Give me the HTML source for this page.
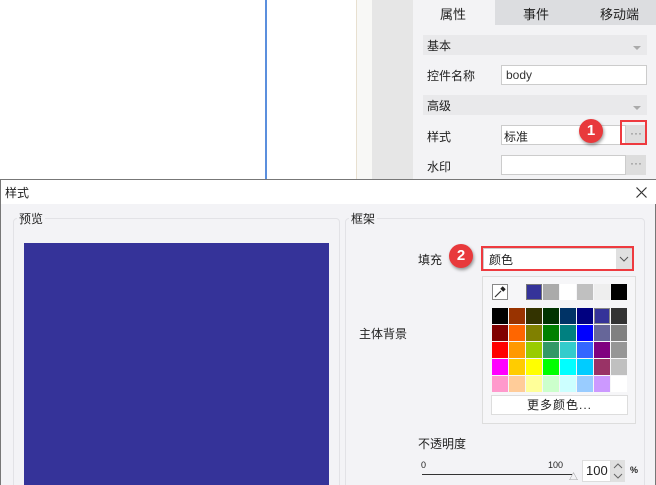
<!DOCTYPE html><html><head><meta charset="utf-8"><style>
*{margin:0;padding:0;box-sizing:border-box}
html,body{width:656px;height:485px;overflow:hidden}
body{position:relative;background:#fff;font-family:"Liberation Sans","Noto Sans CJK SC",sans-serif;font-size:12px;color:#222}
.a{position:absolute}
.cell{position:absolute;width:16px;height:16px}
.badge{position:absolute;width:24px;height:24px;border-radius:12px;background:#e8393c;color:#fff;font-weight:bold;font-size:15px;text-align:center;line-height:24px;box-shadow:1px 2px 3px rgba(0,0,0,.4)}
</style></head><body>
<div class="a" style="left:265px;top:0;width:2px;height:180px;background:#5b8fdd"></div>
<div class="a" style="left:356px;top:0;width:1px;height:180px;background:#e8e0d0"></div>
<div class="a" style="left:357px;top:0;width:15px;height:180px;background:#f8f8f6"></div>
<div class="a" style="left:372px;top:0;width:41px;height:180px;background:#e6e6e6"></div>
<div class="a" style="left:413px;top:0;width:243px;height:180px;background:#f3f3f5"></div>
<div class="a" style="left:495px;top:0;width:161px;height:25px;background:#dcdde0"></div>
<div class="a" style="left:440px;top:4px;font-size:13px">属性</div>
<div class="a" style="left:523px;top:4px;font-size:13px">事件</div>
<div class="a" style="left:600px;top:4px;font-size:13px">移动端</div>
<div class="a" style="left:423px;top:35px;width:224px;height:20px;background:#e9e9eb"></div>
<div class="a" style="left:427px;top:37px">基本</div>
<div class="a" style="left:633px;top:46px;border:4px solid transparent;border-top-color:#aaa"></div>
<div class="a" style="left:427px;top:67px">控件名称</div>
<div class="a" style="left:501px;top:65px;width:146px;height:20px;background:#fff;border:1px solid #ccc;padding:2px 4px;color:#333">body</div>
<div class="a" style="left:423px;top:95px;width:224px;height:20px;background:#e9e9eb"></div>
<div class="a" style="left:427px;top:97px">高级</div>
<div class="a" style="left:633px;top:106px;border:4px solid transparent;border-top-color:#aaa"></div>
<div class="a" style="left:427px;top:128px">样式</div>
<div class="a" style="left:501px;top:125px;width:125px;height:20px;background:#fff;border:1px solid #ccc;padding:2px 2px">标准</div>
<div class="a" style="left:626px;top:125px;width:20px;height:20px;background:#ddd;color:#777;text-align:center;line-height:16px">···</div>
<div class="a" style="left:620px;top:120px;width:27px;height:25px;border:2px solid #ee3a3f"></div>
<div class="badge" style="left:579px;top:119px">1</div>
<div class="a" style="left:427px;top:158px">水印</div>
<div class="a" style="left:501px;top:155px;width:125px;height:20px;background:#fff;border:1px solid #ccc"></div>
<div class="a" style="left:626px;top:155px;width:20px;height:20px;background:#ddd;color:#777;text-align:center;line-height:16px">···</div>

<div class="a" style="left:0;top:179px;width:656px;height:306px;background:#f3f3f6;border:1px solid #777;border-bottom:none"></div>
<div class="a" style="left:1px;top:180px;width:655px;height:24px;background:#fff"></div>
<div class="a" style="left:5px;top:184px">样式</div>
<svg class="a" style="left:636px;top:187px" width="11" height="11"><path d="M0.5 0.5L10.5 10.5M10.5 0.5L0.5 10.5" stroke="#333" stroke-width="1.2"/></svg>
<div class="a" style="left:13px;top:218px;width:327px;height:280px;border:1px solid #e2e2e6;border-radius:4px"></div>
<div class="a" style="left:17px;top:210px;background:#f3f3f6;padding:0 2px">预览</div>
<div class="a" style="left:24px;top:243px;width:305px;height:242px;background:#353399"></div>
<div class="a" style="left:345px;top:218px;width:300px;height:280px;border:1px solid #e2e2e6;border-radius:4px"></div>
<div class="a" style="left:349px;top:210px;background:#f3f3f6;padding:0 2px">框架</div>
<div class="a" style="left:418px;top:251px">填充</div>
<div class="a" style="left:483px;top:248px;width:150px;height:22px;background:#fff;border:1px solid #ccc;padding:2px 5px">颜色</div>
<div class="a" style="left:616px;top:249px;width:16px;height:20px;background:#e0e0e0"></div>
<svg class="a" style="left:619px;top:256px" width="10" height="6"><path d="M1 1L5 5L9 1" stroke="#555" fill="none"/></svg>
<div class="a" style="left:481px;top:246px;width:153px;height:25px;border:2px solid #ee3a3f"></div>
<div class="badge" style="left:449px;top:244px">2</div>
<div class="a" style="left:359px;top:325px">主体背景</div>
<div class="a" style="left:482px;top:276px;width:154px;height:148px;background:#f6f6f8;border:1px solid #ddd"></div>
<div class="a" style="left:492px;top:284px;width:16px;height:16px;background:#fff;border:1px solid #888"></div>
<svg class="a" style="left:493px;top:285px" width="14" height="14"><path d="M2 12L8 6" stroke="#333" stroke-width="1.2"/><path d="M8 3L11 6M9 2L12 5" stroke="#222" stroke-width="2"/></svg>
<div class="cell" style="left:526px;top:284px;background:#353399;border:1px solid #777"></div>
<div class="cell" style="left:543px;top:284px;background:#aaa"></div>
<div class="cell" style="left:560px;top:284px;background:#fff"></div>
<div class="cell" style="left:577px;top:284px;background:#c0c0c0"></div>
<div class="cell" style="left:594px;top:284px;background:#eee"></div>
<div class="cell" style="left:611px;top:284px;background:#000"></div>
<div id="g"></div>
<div class="a" style="left:491px;top:395px;width:137px;height:20px;background:#fff;border:1px solid #ddd;text-align:center;line-height:18px;letter-spacing:1px">更多颜色...</div>
<div class="a" style="left:418px;top:435px">不透明度</div>
<div class="a" style="left:421px;top:460px;font-size:9px">0</div>
<div class="a" style="left:548px;top:460px;font-size:9px">100</div>
<div class="a" style="left:422px;top:474px;width:150px;height:1px;background:#333"></div>
<div class="a" style="left:569px;top:470px;font-size:9px;color:#888">△</div>
<div class="a" style="left:582px;top:460px;width:29px;height:22px;background:#fff;border:1px solid #ddd;padding:2px 3px;font-size:13px">100</div>
<div class="a" style="left:611px;top:460px;width:14px;height:22px;background:#e0e0e0"></div>
<svg class="a" style="left:613px;top:462px" width="10" height="18"><path d="M1 6L5 2L9 6M1 12L5 16L9 12" stroke="#666" fill="none"/></svg>
<div class="a" style="left:630px;top:465px;font-size:9px;font-weight:bold">%</div>
<script>
var c=[["#000","#993300","#333300","#003300","#003366","#000080","#353399","#333"],
["#800000","#ff6600","#808000","#008000","#008080","#0000ff","#666699","#808080"],
["#ff0000","#ff9900","#99cc00","#339966","#33cccc","#3366ff","#800080","#969696"],
["#ff00ff","#ffcc00","#ffff00","#00ff00","#00ffff","#00ccff","#993366","#c0c0c0"],
["#ff99cc","#ffcc99","#ffff99","#ccffcc","#ccffff","#99ccff","#cc99ff","#fff"]];
var h="";for(var r=0;r<5;r++)for(var k=0;k<8;k++){h+='<div class="cell" style="left:'+(492+k*17)+'px;top:'+(308+r*17)+'px;background:'+c[r][k]+(r==0&&k==6?';border:1px solid #888':'')+'"></div>';}
document.getElementById("g").innerHTML=h;
</script>
</body></html>
